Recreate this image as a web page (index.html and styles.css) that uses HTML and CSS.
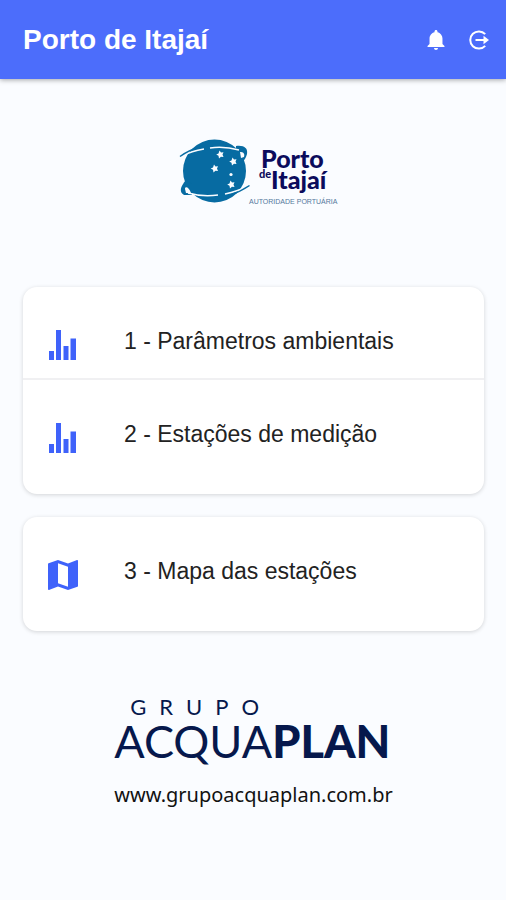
FILE: index.html
```html
<!DOCTYPE html>
<html lang="pt-BR">
<head>
<meta charset="utf-8">
<meta name="viewport" content="width=device-width, initial-scale=1">
<title>Porto de Itajaí</title>
<link rel="stylesheet" href="styles.css">
</head>
<body>
<header class="toolbar">
  <h1 class="title">Porto de Itajaí</h1>
  <button class="icon-button" type="button" aria-label="Notificações">
    <svg width="18" height="20" viewBox="80 48 352 416" fill="currentColor"><path d="M256 464c22.779 0 41.411-18.719 41.411-41.6h-82.823c0 22.881 18.633 41.6 41.412 41.6zm134.589-124.8V224.8c0-63.44-44.516-117.518-103.53-131.041V79.2c0-17.682-13.457-31.2-31.059-31.2s-31.059 13.518-31.059 31.2v14.559c-59.015 13.523-103.53 67.601-103.53 131.041v114.4L80 380.8v20.8h352v-20.8l-41.411-41.6z"/></svg>
  </button>
  <button class="icon-button" type="button" aria-label="Sair">
    <svg width="20" height="20" viewBox="0 0 20 20" fill="none" stroke="currentColor" stroke-width="2"><path d="M16.200 4.200A8.600 8.600 0 1 0 16.200 15.800"/><path d="M6.500 10H16"/><path d="M14.500 5.800 20 10 14.500 14.200Z" fill="currentColor" stroke="none"/></svg>
  </button>
</header>
<main class="content">
  <svg class="port-logo" width="180" height="86" viewBox="0 0 180 86" role="img" aria-label="Porto de Itajaí, Autoridade Portuária">
    <circle cx="50.500" cy="51" r="31.500" fill="#076ba2"/>
    <path d="M72 26C80 25 84 28 83 34C82 38 80 41 77 43L72 36Z" fill="#076ba2"/>
    <path d="M76 32C79 32 81 33 80 37L77 38Z" fill="#fafcff"/>
    <path d="M19 36Q27 31 40 29M46 28Q60 26 75 30" fill="none" stroke="#fafcff" stroke-width="1.500"/>
    <path d="M16 36.500Q25 30 36 27" fill="none" stroke="#076ba2" stroke-width="1.500"/>
    <path d="M22 60C16 67 15 72 20 75L28 75L28 64Z" fill="#076ba2"/>
    <path d="M21 69C21 66 25 67 27 73L22 73Z" fill="#fafcff"/>
    <path d="M24 73Q38 77 54 75M61 74Q74 71 82 67" fill="none" stroke="#fafcff" stroke-width="1.500"/>
    <path d="M64 76Q76 72 85.500 65.500" fill="none" stroke="#076ba2" stroke-width="1.500"/>
    <g fill="#fafcff">
      <path d="M55.500 30.500l1.500 2 2.500-.3-1 2.400 1 2.500-2.600-.4-1.900 1.700-.5-2.600-2.300-1.200 2.300-1.200z"/>
      <path d="M68.500 37.500l1.500 2 2.500-.3-1 2.400 1 2.500-2.600-.4-1.900 1.700-.5-2.600-2.300-1.200 2.300-1.200z"/>
      <path d="M50 44.500l1.500 2 2.500-.3-1 2.400 1 2.500-2.600-.4-1.900 1.700-.5-2.600-2.300-1.200 2.300-1.200z"/>
      <path d="M66.500 60.500l1.500 2 2.500-.3-1 2.400 1 2.500-2.600-.4-1.900 1.700-.5-2.600-2.300-1.200 2.300-1.200z"/>
      <circle cx="67" cy="54.500" r="1.600"/>
    </g>
    <text class="port-name" x="97" y="48">Porto</text>
    <text class="port-de" x="95" y="58">de</text>
    <text class="port-name" x="107" y="69">Itajaí</text>
    <text class="port-tag" x="85" y="84">AUTORIDADE PORTUÁRIA</text>
  </svg>

  <nav class="menu">
    <div class="card">
      <a class="item" href="#parametros">
        <svg class="item-icon" width="30" height="30" viewBox="0 0 30 30" fill="currentColor"><path d="M1 21h5v9H1zM8 0h5v30H8zM15.500 16h5v14h-5zM22.500 8.500h5.500v21.500h-5.500z"/></svg>
        <span>1 - Parâmetros ambientais</span>
      </a>
      <a class="item" href="#estacoes">
        <svg class="item-icon" width="30" height="30" viewBox="0 0 30 30" fill="currentColor"><path d="M1 21h5v9H1zM8 0h5v30H8zM15.500 16h5v14h-5zM22.500 8.500h5.500v21.500h-5.500z"/></svg>
        <span>2 - Estações de medição</span>
      </a>
    </div>
    <div class="card">
      <a class="item" href="#mapa">
        <svg class="item-icon" width="30" height="30" viewBox="64 64 384 384" fill="currentColor"><path d="M437.333 64c-2.176 0-4.396 1.369-9.176 3.207L320 108.802 192 64 71.469 104.531C67.197 105.604 64 109.864 64 115.197v322.136C64 443.729 68.271 448 74.666 448c1.828 0 6.505-2.330 9.087-3.319L192 403.197 320 448l120.531-40.531c4.271-1.073 7.469-5.334 7.469-10.667V74.666C448 68.271 443.729 64 437.333 64zM320 405.333l-128-44.802V106.666l128 44.803v253.864z"/></svg>
        <span>3 - Mapa das estações</span>
      </a>
    </div>
  </nav>

  <footer class="company">
    <div class="company-group">GRUPO</div>
    <div class="company-name">ACQUA<b>PLAN</b></div>
    <a class="company-link" href="#site">www.grupoacquaplan.com.br</a>
  </footer>
</main>
</body>
</html>
```

FILE: styles.css
```css
* {
  box-sizing: border-box;
}

body {
  margin: 0;
  min-height: 100vh;
  background: #fafcff;
  font-family: "Liberation Sans", Arial, sans-serif;
  color: #222;
}

svg {
  display: block;
}

.toolbar {
  display: flex;
  align-items: center;
  gap: 24px;
  padding: 0 17px 0 23px;
  height: 79px;
  background: #4c6dfb;
  color: #fff;
  box-shadow: 0 1px 5px rgba(0, 0, 0, 0.35);
}

.title {
  flex: 1;
  margin: 0;
  font-size: 28px;
  line-height: 32px;
  font-weight: 700;
}

.icon-button {
  padding: 0;
  border: 0;
  background: none;
  color: inherit;
}

.content {
  display: flex;
  flex-direction: column;
  padding: 41px 22px 24px 23px;
}

.port-logo {
  align-self: center;
}

.port-name {
  font: 900 25px Lato, sans-serif;
  fill: #0b0b5c;
}

.port-de {
  font: 900 11px Lato, sans-serif;
  fill: #0b0b5c;
}

.port-tag {
  font: 400 7px "Liberation Sans", sans-serif;
  fill: #54789c;
}

.menu {
  display: flex;
  flex-direction: column;
  gap: 23px;
  margin-top: 81px;
}

.card {
  padding-bottom: 23px;
  border-radius: 14px;
  background: #fff;
  box-shadow: 0 1px 4px rgba(0, 0, 0, 0.16);
}

.item {
  display: flex;
  gap: 46px;
  padding: 40px 24px 18px 25px;
  font-size: 23px;
  line-height: 28px;
  color: inherit;
  text-decoration: none;
}

.item + .item {
  border-top: 2px solid #f0f0f2;
}

.item-icon {
  flex: none;
  margin-top: 3px;
  color: #3f62fa;
}

.company {
  align-self: center;
  margin-top: 62px;
  color: #06184c;
  font-family: Lato, sans-serif;
}

.company-group {
  padding-left: 16px;
  font-size: 22px;
  line-height: 28px;
  letter-spacing: 13px;
}

.company-name {
  font-size: 45px;
  line-height: 40px;
  font-weight: 400;
}

.company-name b {
  font-weight: 900;
}

.company-link {
  display: block;
  margin-top: 20px;
  font: 400 20px/28px "Noto Sans", sans-serif;
  color: #111;
  text-decoration: none;
}
```
